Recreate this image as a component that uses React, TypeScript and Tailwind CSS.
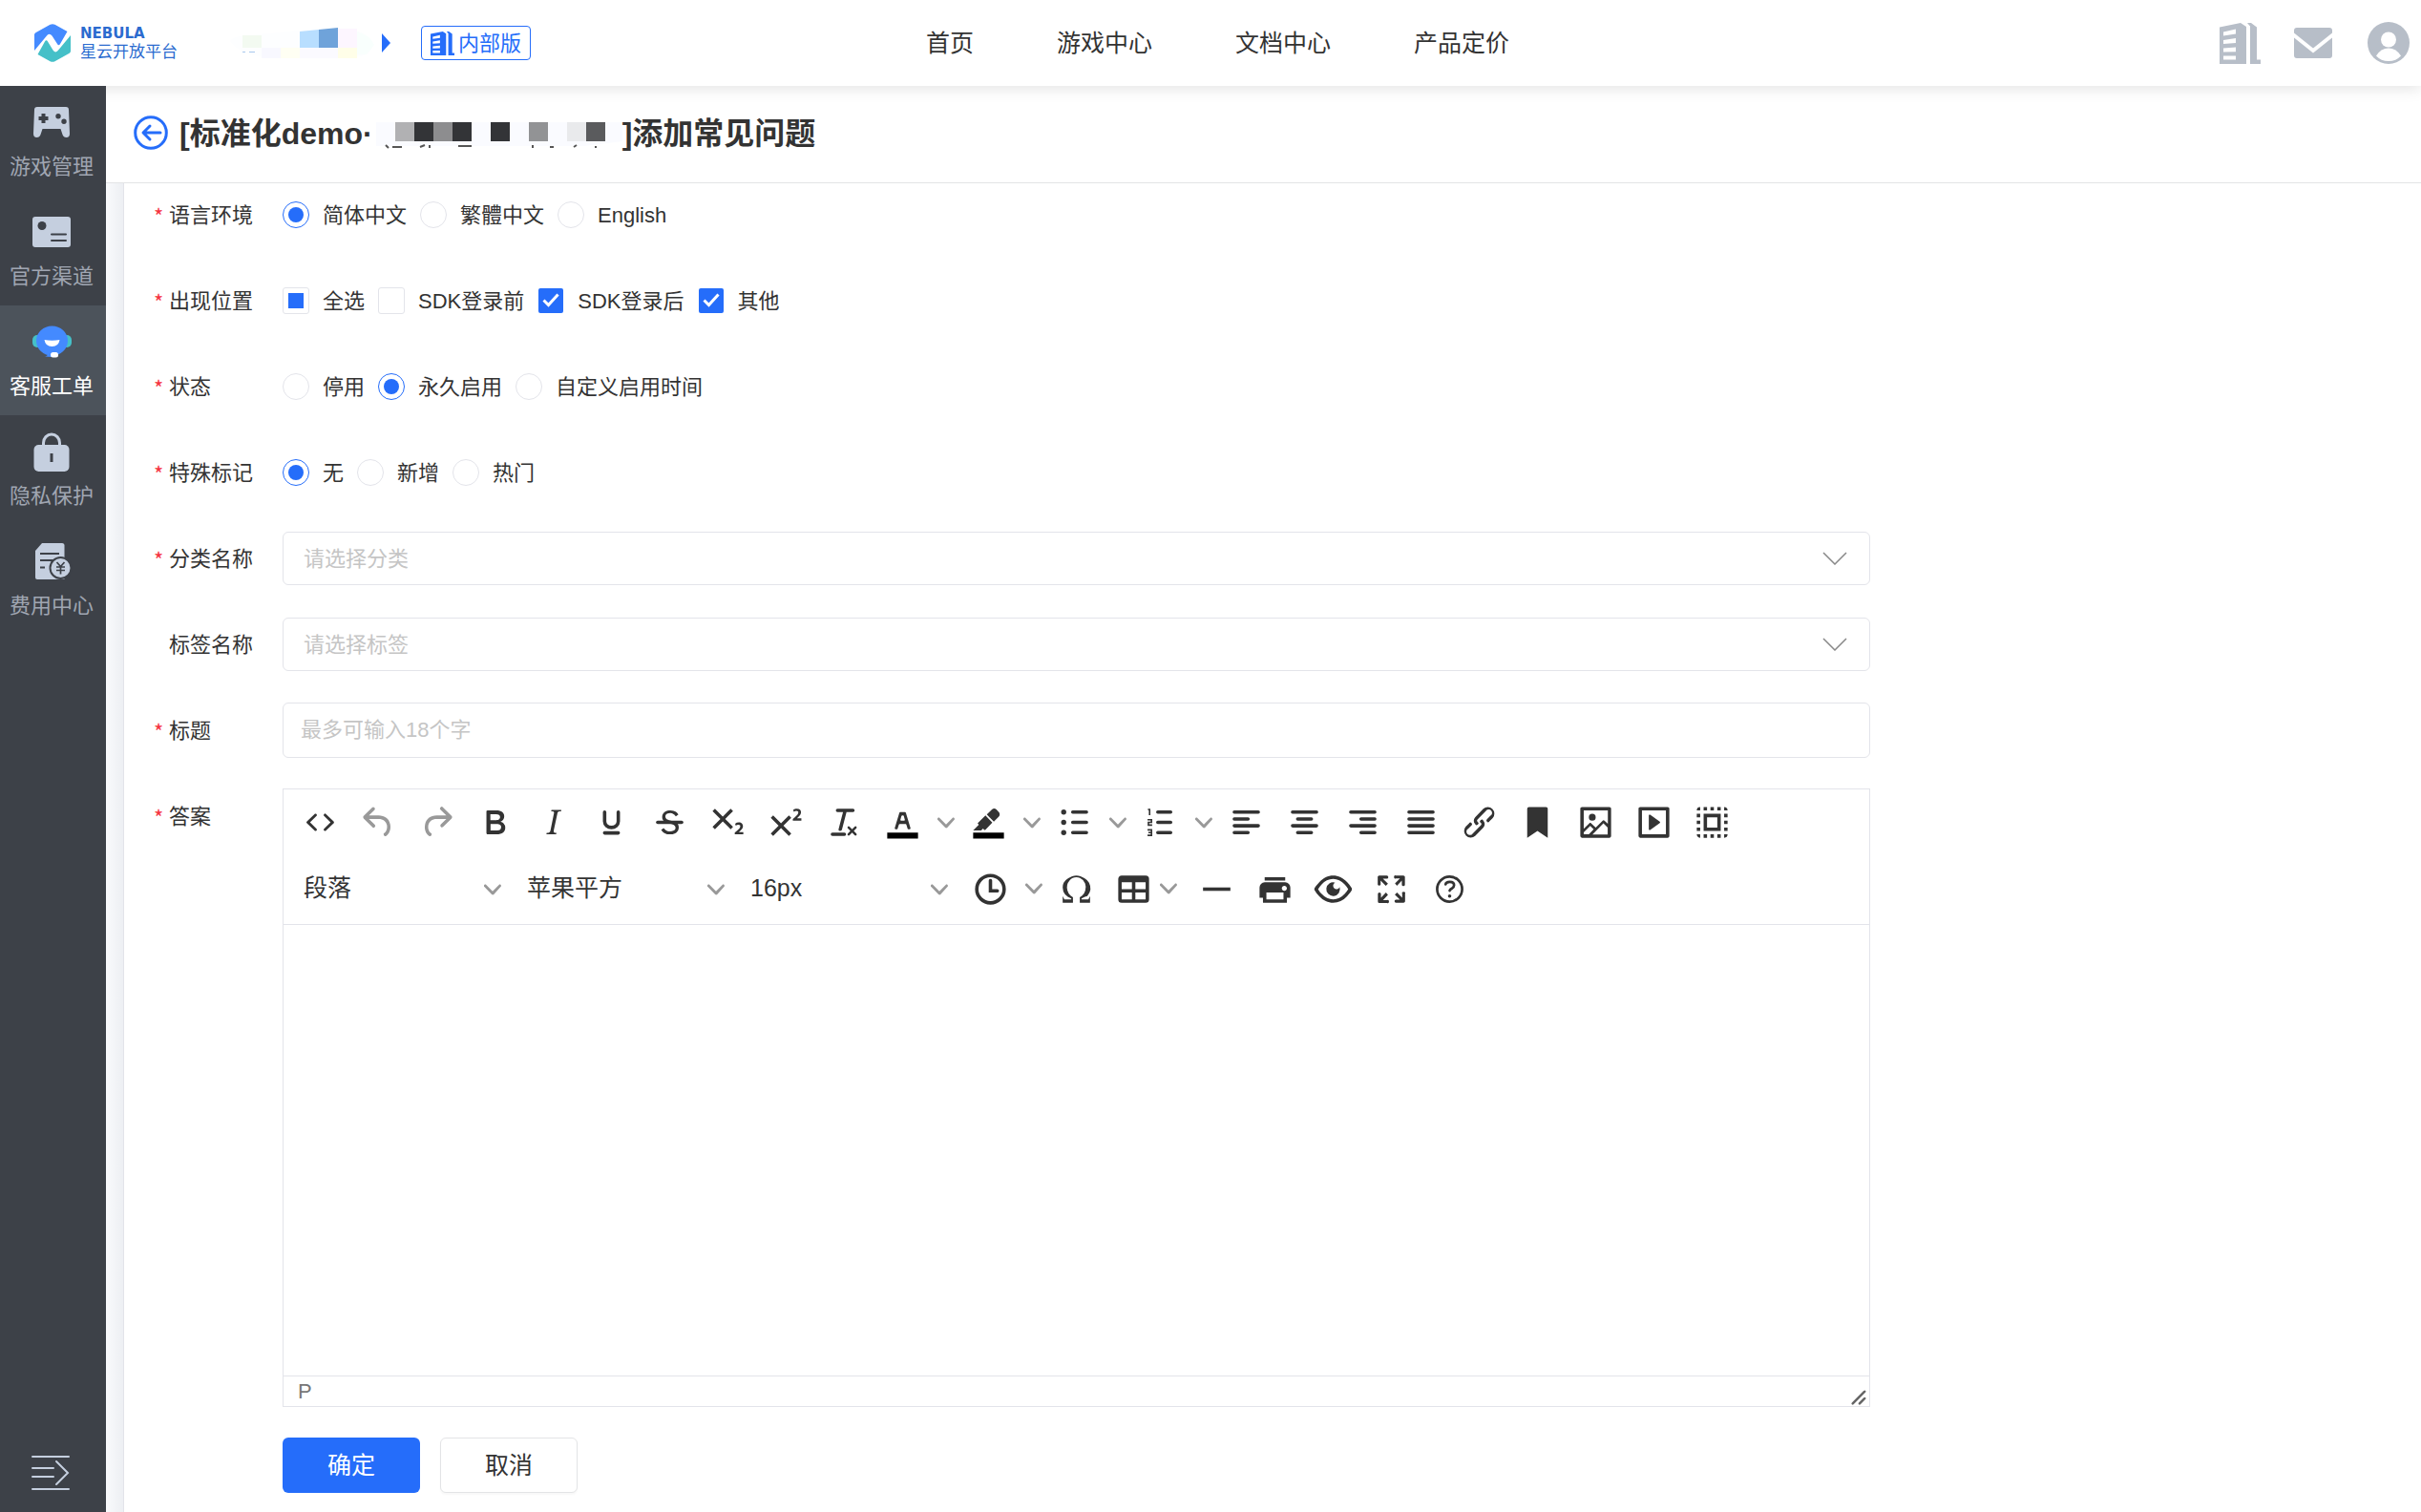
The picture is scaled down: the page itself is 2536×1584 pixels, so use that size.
import React, { useState } from 'react';
import { clsx } from 'clsx';

type SvgProps = { className?: string };

const LogoMark = () => (
  <svg viewBox="0 0 38 40" className="h-10 w-[38px]" aria-hidden="true">
    <path d="M0 28V11.500q0-1.500 1.300-2.300L16.500.800q2.500-1.300 5 0L34.500 8 27 21q-1.500 2.500-3 0l-5.500-8.500q-3-3.500-6 .5z" fill="#448aff" />
    <path d="M38 12v16.500q0 1.500-1.300 2.300L21.500 39.200q-2.500 1.300-5 0L3.500 32 11 18.500q1.500-2.500 3 0l5.500 9q3 4 6-.5z" fill="#45c0c8" />
  </svg>
);

const Building = ({ className }: SvgProps) => (
  <svg viewBox="0 0 43 43" className={className} fill="currentColor" aria-hidden="true">
    <path fillRule="evenodd" d="M0 4.500 22 0l6 4v39H0zM4 9.500v4l13-2V6.500zM4 18v4l13-1v-5zM4 26.500v4l13-.3v-4.700zM4 34.500v4h13v-4z" />
    <path d="M29 0h4l6 4.500V38.500h4V43H32V3.500z" />
  </svg>
);

const Mail = () => (
  <svg viewBox="0 0 40 32" className="h-8 w-10" fill="currentColor" aria-hidden="true">
    <path d="M3 0h34q3 0 3 3v2.500L20 21.500 0 5.500V3q0-3 3-3z" />
    <path d="M0 10.500 20 26.500l20-16V29q0 3-3 3H3q-3 0-3-3z" />
  </svg>
);

const Avatar = () => (
  <svg viewBox="0 0 44 44" className="size-11" aria-hidden="true">
    <circle cx="22" cy="22" r="22" fill="currentColor" />
    <circle cx="22" cy="18.500" r="8" fill="#fff" />
    <path d="M9 35.500Q14 27.500 22 27.500t13 8Q30 41 22 41T9 35.500z" fill="#fff" />
  </svg>
);

const Gamepad = () => (
  <svg viewBox="0 0 44 44" className="size-11" aria-hidden="true">
    <path
      fillRule="evenodd"
      fill="currentColor"
      d="M7 6h30q3 0 3 3l1 25q0 4-3.500 4-3 0-4-3l-2-6H12.500l-2 6q-1 3-4 3Q3 38 3 34L4 9q0-3 3-3zm4.500 7v3h-3v4h3v3h4v-3h3v-4h-3v-3zM29 13a2.700 2.700 0 1 0 0 5.400A2.700 2.700 0 0 0 29 13zm6 5.500a2.700 2.700 0 1 0 0 5.400 2.700 2.700 0 0 0 0-5.400z"
    />
  </svg>
);

const Channel = () => (
  <svg viewBox="0 0 44 44" className="size-11" aria-hidden="true">
    <rect x="2" y="6" width="40" height="32" rx="3" fill="currentColor" />
    <circle cx="12" cy="15.500" r="4.500" fill="#3d4148" />
    <path d="M22 24.500h15M22 31h15" stroke="#3d4148" strokeWidth="2" strokeLinecap="round" />
  </svg>
);

const Robot = () => (
  <svg viewBox="0 0 44 44" className="size-11" aria-hidden="true">
    <rect x="2" y="15" width="10" height="13" rx="5" fill="#45c0c8" />
    <rect x="33" y="15" width="10" height="13" rx="5" fill="#45c0c8" />
    <ellipse cx="22.500" cy="21" rx="16.500" ry="15.500" fill="#448aff" />
    <path d="M15 37.500q4-1 3-4h10l-6 4.500z" fill="#448aff" />
    <path d="M14.500 20q8 1.500 16 0-1 7-8 7t-8-7z" fill="#fff" />
    <rect x="21" y="33" width="8" height="5.500" rx="2.500" fill="#fff" />
  </svg>
);

const Lock = () => (
  <svg viewBox="0 0 44 44" className="size-11" aria-hidden="true">
    <path d="M13.500 18v-5a8.500 9 0 0 1 17 0v5" fill="none" stroke="currentColor" strokeWidth="3" />
    <rect x="3.500" y="15" width="37" height="28" rx="5" fill="currentColor" />
    <path d="M22 24v9" stroke="#3d4148" strokeWidth="3" />
  </svg>
);

const Bill = () => (
  <svg viewBox="0 0 44 44" className="size-11" aria-hidden="true">
    <path d="M12 3h21q2.500 0 2.500 2.500V41H7q-2 0-2-2V11z" fill="currentColor" />
    <path d="M10 14h20M10 21h14M10 28.500h5" stroke="#3d4148" strokeWidth="2" />
    <circle cx="31.500" cy="29" r="12" fill="#3d4148" />
    <circle cx="31.500" cy="29" r="10" fill="currentColor" />
    <path d="m27.500 23 4 4.500 4-4.500M31.500 27v8.500M27 28h9M27 31.500h9" fill="none" stroke="#3d4148" strokeWidth="1.700" />
  </svg>
);

const Expand = () => (
  <svg viewBox="0 0 40 38" className="h-[38px] w-10" fill="none" stroke="currentColor" strokeWidth="2" strokeLinecap="round" aria-hidden="true">
    <path d="M1 2h38M1 14h22M1 23h22M1 36h38M26 7l12 12-12 12" />
  </svg>
);

const Chevron = ({ className }: SvgProps) => (
  <svg viewBox="0 0 10 10" className={clsx('size-[18px] shrink-0 text-[#999]', className)} fill="currentColor" aria-hidden="true">
    <path d="M8.700 2.200c.3-.3.8-.3 1 0 .4.4.4.9 0 1.200L5.700 7.800c-.3.3-.9.3-1.200 0L.2 3.400a.8.800 0 0 1 0-1.200c.3-.3.8-.3 1.100 0L5 6l3.700-3.800z" />
  </svg>
);

const ToolIcon = ({ children }: { children: React.ReactNode }) => (
  <svg viewBox="0 0 24 24" className="size-[43px] shrink-0" fill="currentColor" fillRule="evenodd" aria-hidden="true">
    {children}
  </svg>
);

const lines = (d: string) => <path d={d} fill="none" stroke="currentColor" strokeWidth="2" strokeLinecap="round" />;

type Tool = { label: string; icon: React.ReactNode; split?: boolean; disabled?: boolean };

const topTools: Tool[] = [
  {
    label: '源代码',
    icon: <path d="M9.800 15.700c.3.3.3.8 0 1-.3.4-.9.4-1.200 0l-4.400-4.100a.8.800 0 0 1 0-1.200l4.400-4.200c.3-.3.9-.3 1.200 0 .3.3.3.8 0 1.100L6 12l3.800 3.700zM14.200 15.700c-.3.3-.3.8 0 1 .4.4.9.4 1.200 0l4.400-4.100c.3-.3.3-.9 0-1.200l-4.400-4.200a.8.800 0 0 0-1.200 0c-.3.3-.3.8 0 1.100L18 12l-3.800 3.700z" />,
  },
  {
    label: '撤销',
    disabled: true,
    icon: <path d="M6.400 8H12c3.700 0 6.200 2 6.800 5.100.6 2.700-.4 5.600-2.300 6.800a1 1 0 0 1-1-1.800c1.100-.6 1.800-2.700 1.400-4.600-.5-2.100-2.100-3.500-4.900-3.500H6.400l3.300 3.300a1 1 0 1 1-1.400 1.400l-5-5a1 1 0 0 1 0-1.400l5-5a1 1 0 0 1 1.400 1.400L6.400 8z" />,
  },
  {
    label: '重做',
    disabled: true,
    icon: <path d="M17.600 10H12c-2.800 0-4.400 1.400-4.900 3.500-.4 2 .3 4 1.400 4.600a1 1 0 1 1-1 1.800c-2-1.200-2.900-4.100-2.300-6.800.6-3 3-5.100 6.800-5.100h5.600l-3.300-3.300a1 1 0 1 1 1.400-1.400l5 5a1 1 0 0 1 0 1.400l-5 5a1 1 0 0 1-1.400-1.400l3.300-3.300z" />,
  },
  {
    label: '粗体',
    icon: <path d="M7.800 19c-.3 0-.5 0-.6-.2l-.2-.5V5.700c0-.2 0-.4.2-.5l.6-.2h5c1.500 0 2.700.3 3.500 1 .7.6 1.100 1.400 1.100 2.500a3 3 0 0 1-.6 1.900c-.4.6-1 1-1.600 1.200.4.1.9.3 1.300.6s.8.7 1 1.200c.4.4.5 1 .5 1.600 0 1.300-.4 2.300-1.300 3-.8.7-2.100 1-3.800 1H7.800zm5-8.300c.6 0 1.200-.1 1.600-.5.4-.3.6-.7.6-1.300 0-1.100-.8-1.700-2.300-1.700H9.300v3.500h3.400zm.5 6c.7 0 1.300-.1 1.700-.4.4-.4.6-.9.6-1.500s-.2-1-.7-1.400c-.4-.3-1-.4-2-.4H9.400v3.800h4z" />,
  },
  {
    label: '斜体',
    icon: <path d="M16.700 4.700l-.1.9h-.3c-.6 0-1 0-1.400.3-.3.3-.4.6-.5 1.100l-2.100 9.800v.6c0 .5.4.8 1.400.8h.2l-.2.8H8l.2-.8h.2c1.100 0 1.800-.5 2-1.500l2-9.800.1-.5c0-.6-.4-.8-1.400-.8h-.3l.2-.9h5.800z" />,
  },
  { label: '下划线', icon: lines('M8 6v5.500c0 2 1.800 3.500 4 3.500s4-1.500 4-3.500V6M8 18.200h8') },
  {
    label: '删除线',
    icon: (
      <>
        <path d="M15.600 8.500c-.5-.7-1-1.100-1.300-1.300-.6-.4-1.300-.6-2-.6-2.700 0-2.800 1.700-2.800 2.100 0 1.600 1.800 2 3.200 2.300 4.400.9 4.600 2.800 4.600 3.900 0 1.400-.7 4.100-5 4.100A6.200 6.200 0 0 1 7 16.400l1.500-1.100c.4.6 1.600 2 3.700 2 1.600 0 2.500-.4 3-1.200.4-.8.3-2-.8-2.600-.7-.4-1.600-.7-2.900-1-1-.2-3.900-.8-3.900-3.600C7.600 6 10.300 5 12.400 5c2.900 0 4.200 1.600 4.700 2.400l-1.500 1.100z" />
        <path d="M5 11h14a1 1 0 0 1 0 2H5a1 1 0 0 1 0-2z" />
      </>
    ),
  },
  {
    label: '下标',
    icon: <path d="M10.400 10l4.600 4.600-1.400 1.400L9 11.400 4.400 16 3 14.600 7.600 10 3 5.400 4.400 4 9 8.600 13.600 4 15 5.400 10.400 10zM21 19h-5v-1l1-.8 1.700-1.600c.3-.4.5-.8.5-1.200 0-.3 0-.6-.2-.7-.2-.2-.5-.3-.9-.3a2 2 0 0 0-.8.2l-.7.3-.4-1.100 1-.6 1.200-.2c.8 0 1.400.3 1.800.7.4.4.6.9.6 1.500s-.2 1.100-.5 1.600a8 8 0 0 1-1.300 1.300l-.6.6h2.600V19z" />,
  },
  {
    label: '上标',
    icon: <path d="M15 9.400L10.400 14l4.600 4.600-1.400 1.400L9 15.400 4.400 20 3 18.600 7.600 14 3 9.400 4.400 8 9 12.600 13.600 8 15 9.400zm5.900 1.600h-5v-1l1-.8 1.700-1.600c.3-.5.5-.9.5-1.300 0-.3 0-.5-.2-.7-.2-.2-.5-.3-.9-.3l-.8.2-.7.4-.4-1.200c.2-.2.5-.4 1-.5.3-.2.8-.2 1.200-.2.8 0 1.400.2 1.800.6.4.4.6 1 .6 1.600 0 .5-.2 1-.5 1.500l-1.300 1.400-.6.5h2.600V11z" />,
  },
  {
    label: '清除格式',
    icon: <path d="M13.200 6a1 1 0 0 1 0 .2l-2.600 10a1 1 0 0 1-1 .8h-.2a.8.800 0 0 1-.8-1l2.600-10H8a1 1 0 1 1 0-2h9a1 1 0 0 1 0 2h-3.800zM5 18h7a1 1 0 0 1 0 2H5a1 1 0 0 1 0-2zm13 1.500L16.500 18 15 19.500a.7.700 0 0 1-1-1l1.500-1.500-1.500-1.500a.7.700 0 0 1 1-1l1.500 1.500 1.500-1.500a.7.700 0 0 1 1 1L17.500 17l1.500 1.500a.7.700 0 0 1-1 1z" />,
  },
  {
    label: '文字颜色',
    split: true,
    icon: (
      <>
        <path d="M3 18h18v3.500H3z" fill="#000" />
        <path d="M8.700 16h-.8a.5.500 0 0 1-.5-.6l2.700-9c.1-.3.3-.4.5-.4h2.800c.2 0 .4.1.5.4l2.700 9a.5.500 0 0 1-.5.6h-.8a.5.500 0 0 1-.4-.4l-.7-2.200c0-.3-.3-.4-.5-.4h-3.400c-.2 0-.4.1-.5.4l-.7 2.200c0 .3-.2.4-.4.4zm2.600-7.600l-.6 2a.5.500 0 0 0 .5.6h1.600a.5.500 0 0 0 .5-.6l-.6-2c0-.3-.3-.4-.5-.4h-.4c-.2 0-.4.1-.5.4z" />
      </>
    ),
  },
  {
    label: '背景颜色',
    split: true,
    icon: (
      <>
        <path d="M3 18h18v3.500H3z" fill="#000" />
        <path d="M7.700 16.700H3l3.300-3.300-.7-.8L10.200 8l4 4.100-4 4.200c-.2.2-.6.2-.8 0l-.6-.7-1.100 1.100zm5-7.500L11 7.400l3-2.900a2 2 0 0 1 2.600 0L18 6c.7.7.7 2 0 2.700l-2.900 2.900-1.800-1.800-.5-.6z" />
      </>
    ),
  },
  {
    label: '项目符号列表',
    split: true,
    icon: (
      <>
        {lines('M11 6h8M11 12h8M11 18h8')}
        <circle cx="5.700" cy="6" r="1.500" />
        <circle cx="5.700" cy="12" r="1.500" />
        <circle cx="5.700" cy="18" r="1.500" />
      </>
    ),
  },
  {
    label: '编号列表',
    split: true,
    icon: (
      <>
        {lines('M10.500 6h7.500M10.500 12h7.500M10.500 18h7.500')}
        <path d="M4.700 4.500h1v3.300M4.500 10.500h2.300V12H5v1.600h2.200M4.500 16.400h2.300v3.200H4.500M5 18h1.800" fill="none" stroke="currentColor" strokeWidth=".9" />
      </>
    ),
  },
  { label: '左对齐', icon: lines('M5 6h14M5 10h8M5 14h14M5 18h8') },
  { label: '居中', icon: lines('M5 6h14M8 10h8M5 14h14M8 18h8') },
  { label: '右对齐', icon: lines('M5 6h14M11 10h8M5 14h14M11 18h8') },
  { label: '两端对齐', icon: lines('M5 6h14M5 10h14M5 14h14M5 18h14') },
  {
    label: '插入链接',
    icon: <path d="M6.200 12.300a1 1 0 0 1 1.400 1.400l-2.100 2a2 2 0 1 0 2.700 2.800l4.800-4.800a1 1 0 0 0 0-1.400 1 1 0 1 1 1.400-1.300 2.900 2.900 0 0 1 0 4L9.600 20a3.900 3.900 0 0 1-5.500-5.500l2-2zm11.600-.6a1 1 0 0 1-1.400-1.400l2-2a2 2 0 1 0-2.600-2.800L11 10.300a1 1 0 0 0 0 1.400A1 1 0 1 1 9.600 13a2.900 2.900 0 0 1 0-4L14.400 4a3.900 3.900 0 0 1 5.500 5.500l-2 2z" />,
  },
  { label: '锚点', icon: <path d="M6 4v17l6-4 6 4V4c0-.6-.4-1-1-1H7a1 1 0 0 0-1 1z" /> },
  {
    label: '图片',
    icon: <path d="M5 15.700l3.300-3.200c.3-.3.7-.3 1 0L12 15l4.100-4c.3-.4.8-.4 1 0l2 1.900V5H5v10.700zM5 18V19h3l2.800-2.900-2-2L5 17.900zm14-3l-2.500-2.400-6.400 6.500H19v-4zM4 3h16c.6 0 1 .4 1 1v16c0 .6-.4 1-1 1H4a1 1 0 0 1-1-1V4c0-.6.4-1 1-1zm6 8a2 2 0 1 0 0-4 2 2 0 0 0 0 4z" />,
  },
  {
    label: '视频',
    icon: <path d="M4 3h16c.6 0 1 .4 1 1v16c0 .6-.4 1-1 1H4a1 1 0 0 1-1-1V4c0-.6.4-1 1-1zm1 2v14h14V5H5zm4.800 2.600l5.600 4a.5.500 0 0 1 0 .8l-5.600 4A.5.500 0 0 1 9 16V8a.5.500 0 0 1 .8-.4z" />,
  },
  {
    label: '全选',
    icon: <path d="M3 5h2V3a2 2 0 0 0-2 2zm0 8h2v-2H3v2zm4 8h2v-2H7v2zM3 9h2V7H3v2zm10-6h-2v2h2V3zm6 0v2h2a2 2 0 0 0-2-2zM5 21v-2H3c0 1.100.9 2 2 2zm-2-4h2v-2H3v2zM9 3H7v2h2V3zm2 18h2v-2h-2v2zm8-8h2v-2h-2v2zm0 8a2 2 0 0 0 2-2h-2v2zm0-12h2V7h-2v2zm0 8h2v-2h-2v2zm-4 4h2v-2h-2v2zm0-16h2V3h-2v2zM7 17h10V7H7v10zm2-8h6v6H9V9z" />,
  },
];

const insertTools: Tool[] = [
  {
    label: '日期时间',
    split: true,
    icon: (
      <>
        <path d="M12 19a7 7 0 1 0 0-14 7 7 0 0 0 0 14zm0 2a9 9 0 1 1 0-18 9 9 0 0 1 0 18z" />
        <path d="M16 12h-3V7c0-.6-.4-1-1-1a1 1 0 0 0-1 1v7h5c.6 0 1-.4 1-1s-.4-1-1-1z" />
      </>
    ),
  },
  {
    label: '特殊字符',
    icon: <path d="M15 18h4l1-2v4h-6v-3.300l1.400-1a6 6 0 0 0 1.800-2.900 6.300 6.300 0 0 0-.1-4.100 5.800 5.800 0 0 0-3-3.200c-.6-.3-1.300-.5-2.100-.5a5.100 5.100 0 0 0-3.900 1.800 6.300 6.300 0 0 0-1.300 6 6.200 6.200 0 0 0 1.800 3l1.400.9V20H4v-4l1 2h4v-.5l-2-1L5.400 15A6.500 6.500 0 0 1 4 11c0-1 .2-1.900.6-2.700A7 7 0 0 1 7.300 5.600C8.800 4.600 10.300 4 12 4s3.200.6 4.700 1.600a7 7 0 0 1 2.700 2.700 6.800 6.800 0 0 1-1 7.700L17 16.500l-2 1v.5z" />,
  },
];

const viewTools: Tool[] = [
  { label: '水平线', icon: <path d="M4 11h16v2H4z" /> },
  {
    label: '打印',
    icon: <path d="M18 8H6a3 3 0 0 0-3 3v6h2v3h14v-3h2v-6a3 3 0 0 0-3-3zm-1 10H7v-4h10v4zm.5-5c-.8 0-1.500-.7-1.500-1.500s.7-1.500 1.500-1.500 1.500.7 1.500 1.500-.7 1.500-1.500 1.500zm.5-8H6v2h12V5z" />,
  },
  {
    label: '预览',
    icon: <path d="M3.500 12.500c.5.8 1.100 1.600 1.800 2.300 2 2 4.200 3.200 6.700 3.200s4.700-1.200 6.700-3.200a16.200 16.200 0 0 0 2.100-2.800 15.700 15.700 0 0 0-2.100-2.800c-2-2-4.200-3.200-6.700-3.200a9.300 9.300 0 0 0-6.700 3.200A16.200 16.200 0 0 0 3.200 12c0 .2.2.3.3.5zm-2.400-1l.7-1.200L4 7.800C6.200 5.400 8.900 4 12 4c3 0 5.800 1.400 8.100 3.800a18.200 18.200 0 0 1 2.800 3.700v1l-.7 1.200-2.100 2.500c-2.300 2.400-5 3.800-8.100 3.800-3 0-5.800-1.400-8.100-3.800a18.200 18.200 0 0 1-2.800-3.700 1 1 0 0 1 0-1zm12-3.300a2 2 0 1 0 2.700 2.600 4 4 0 1 1-2.600-2.600z" />,
  },
  {
    label: '全屏',
    icon: <path d="M15.300 10l-1.200-1.300 2.900-3h-2.300a.9.900 0 1 1 0-1.700H19c.5 0 .9.4.9.9v4.400a.9.900 0 1 1-1.800 0V7l-2.900 3zm0 4l3 3v-2.300a.9.900 0 1 1 1.700 0V19c0 .5-.4.9-.9.9h-4.400a.9.900 0 1 1 0-1.800H17l-3-2.900 1.300-1.200zM10 15.400l-2.900 3h2.300a.9.900 0 1 1 0 1.700H5a.9.900 0 0 1-.9-.9v-4.400a.9.900 0 1 1 1.800 0V17l2.900-3 1.200 1.300zM8.700 10L5.700 7v2.300a.9.900 0 0 1-1.700 0V5c0-.5.4-.9.9-.9h4.400a.9.900 0 0 1 0 1.800H7l3 2.900-1.300 1.200z" />,
  },
  {
    label: '帮助',
    icon: (
      <>
        <circle cx="12" cy="12" r="7.300" fill="none" stroke="currentColor" strokeWidth="1.500" />
        <path d="M9.600 9.200c.2-1 1.200-1.500 2.500-1.500 1.500 0 2.500.7 2.500 1.900 0 1-.5 1.500-1.300 2-.8.4-1.100.8-1.300 1.300" fill="none" stroke="currentColor" strokeWidth="1.500" strokeLinecap="round" />
        <circle cx="12" cy="16" r="1" />
      </>
    ),
  },
];

const ToolButton = ({ tool }: { tool: Tool }) => (
  <>
    <button
      type="button"
      aria-label={tool.label}
      disabled={tool.disabled}
      className="flex h-[61px] w-[61px] items-center justify-center text-[#333] disabled:text-[#999]"
    >
      <ToolIcon>{tool.icon}</ToolIcon>
    </button>
    {tool.split && (
      <button type="button" aria-label={`${tool.label}选项`} className="flex h-[61px] w-[29px] items-center justify-center">
        <Chevron />
      </button>
    )}
  </>
);

const ToolSelect = ({ label, value }: { label: string; value: string }) => (
  <div className="relative w-[234px]">
    <select aria-label={label} className="h-[61px] w-full appearance-none bg-transparent pl-[13px] text-[25px] text-[#333]">
      <option>{value}</option>
    </select>
    <Chevron className="pointer-events-none absolute top-[22px] right-[14px]" />
  </div>
);

const Editor = () => (
  <div className="flex h-[648px] flex-col border border-[#e3e4ea]">
    <div role="toolbar" aria-label="编辑器工具栏" className="border-b border-[#e3e4ea] pb-0.5 pl-2">
      <div className="flex h-[69px] items-center">
        {topTools.map((tool) => (
          <ToolButton key={tool.label} tool={tool} />
        ))}
      </div>
      <div className="flex h-[70px] items-center">
        <ToolSelect label="段落格式" value="段落" />
        <ToolSelect label="字体" value="苹果平方" />
        <ToolSelect label="字号" value="16px" />
        {insertTools.map((tool) => (
          <ToolButton key={tool.label} tool={tool} />
        ))}
        <button type="button" aria-label="表格" className="flex h-[61px] w-[86px] items-center gap-1.5 pl-2 text-[#333]">
          <ToolIcon>
            <path d="M19 4a2 2 0 0 1 2 2v12a2 2 0 0 1-2 2H5a2 2 0 0 1-2-2V6c0-1.100.9-2 2-2h14zM5 14v4h6v-4H5zm14 0h-6v4h6v-4zm0-6h-6v4h6V8zM5 12h6V8H5v4z" />
          </ToolIcon>
          <Chevron />
        </button>
        {viewTools.map((tool) => (
          <ToolButton key={tool.label} tool={tool} />
        ))}
      </div>
    </div>
    <textarea id="answer" className="w-full flex-1 resize-none p-4 text-[25px] outline-none" />
    <div className="flex h-8 items-center justify-between border-t border-[#e3e4ea] pr-0.5 pl-[15px] text-[22px] text-[#777]">
      <span>P</span>
      <svg viewBox="0 0 10 10" className="size-[18px] self-end" fill="#666" aria-hidden="true">
        <path d="M8.100 1.100A.5.500 0 1 1 9 2l-7 7A.5.500 0 1 1 1 8l7-7zM8.100 5.100A.5.500 0 1 1 9 6l-3 3A.5.500 0 1 1 5 8l3-3z" />
      </svg>
    </div>
  </div>
);

const FormRow = ({ label, htmlFor, required = true, children }: { label: string; htmlFor?: string; required?: boolean; children: React.ReactNode }) => {
  const Tag = htmlFor ? 'label' : 'span';
  return (
    <div className="grid grid-cols-[135px_1fr]">
      <Tag htmlFor={htmlFor} className="flex h-[58px] items-center">
        <span className="w-4 font-['Noto_Sans_CJK_SC',sans-serif] text-[#f5333f]">{required && '*'}</span>
        {label}
      </Tag>
      {children}
    </div>
  );
};

const RadioGroup = ({ name, options, initial }: { name: string; options: string[]; initial: string }) => {
  const [value, setValue] = useState(initial);
  return (
    <div role="radiogroup" aria-label={name} className="flex h-[58px] items-center gap-[14px]">
      {options.map((option) => (
        <label key={option} className="flex items-center gap-[14px]">
          <input
            type="radio"
            name={name}
            checked={value === option}
            onChange={() => setValue(option)}
            className="grid size-7 appearance-none place-items-center rounded-full border border-[#e3e4ea] before:size-4 before:rounded-full checked:border-[#256dfa] checked:before:bg-[#256dfa]"
          />
          {option}
        </label>
      ))}
    </div>
  );
};

const places = ['SDK登录前', 'SDK登录后', '其他'];

const PlaceGroup = () => {
  const [picked, setPicked] = useState(['SDK登录后', '其他']);
  const all = picked.length === places.length;
  const some = picked.length > 0 && !all;
  const toggle = (place: string) =>
    setPicked(picked.includes(place) ? picked.filter((p) => p !== place) : [...picked, place]);

  const box = 'size-7 appearance-none rounded-[3px] border row-start-1 col-start-1';
  const tick = (
    <svg viewBox="0 0 28 28" className="pointer-events-none col-start-1 row-start-1 size-7" fill="none" stroke="#fff" strokeWidth="3" aria-hidden="true">
      <path d="m6.500 13.500 5 5 10-11" />
    </svg>
  );

  return (
    <div role="group" aria-label="出现位置" className="flex h-[58px] items-center gap-[14px]">
      <label className="flex items-center gap-[14px]">
        <span className="grid place-items-center">
          <input
            type="checkbox"
            checked={all}
            onChange={() => setPicked(all ? [] : places)}
            className={clsx(box, 'border-[#e3e4ea]', all && 'bg-[#256dfa]')}
          />
          {some && <span className="pointer-events-none col-start-1 row-start-1 size-4 bg-[#256dfa]" />}
          {all && tick}
        </span>
        全选
      </label>
      {places.map((place) => (
        <label key={place} className="flex items-center gap-[14px]">
          <span className="grid place-items-center">
            <input
              type="checkbox"
              checked={picked.includes(place)}
              onChange={() => toggle(place)}
              className={clsx(box, picked.includes(place) ? 'border-transparent bg-[#256dfa] bg-clip-padding' : 'border-[#e3e4ea]')}
            />
            {picked.includes(place) && tick}
          </span>
          {place}
        </label>
      ))}
    </div>
  );
};

const SelectField = ({ id, placeholder }: { id: string; placeholder: string }) => (
  <div className="relative flex h-[58px] items-center">
    <select id={id} className="h-14 w-full appearance-none rounded-md border border-[#e3e4ea] bg-white pl-[21px] text-[#c5c5c5]">
      <option>{placeholder}</option>
    </select>
    <svg viewBox="0 0 26 14" className="pointer-events-none absolute right-6 h-[14px] w-[26px]" fill="none" stroke="#888" strokeWidth="1.500" aria-hidden="true">
      <path d="m1 1 12 12L25 1" />
    </svg>
  </div>
);

const sideItems = [
  { label: '游戏管理', icon: <Gamepad /> },
  { label: '官方渠道', icon: <Channel /> },
  { label: '客服工单', icon: <Robot />, active: true },
  { label: '隐私保护', icon: <Lock /> },
  { label: '费用中心', icon: <Bill /> },
];

const Header = () => (
  <header className="relative z-10 grid h-[90px] grid-cols-[38.25%_auto_1fr] items-center bg-white text-[25px] text-[#333] shadow-[0_2px_16px_rgba(0,0,0,0.12)]">
    <div className="flex items-center">
      <a href="#" className="ml-9 flex items-center gap-2.5 text-[#2b6bcf]">
        <LogoMark />
        <span className="flex w-[102px] flex-col pt-1">
          <span className="font-['DejaVu_Sans'] text-[15px] leading-4 font-bold">NEBULA</span>
          <span className="text-[17px] leading-6 whitespace-nowrap">星云开放平台</span>
        </span>
      </a>
      <svg viewBox="0 0 152 32" className="ml-[55px] h-8 w-[152px]" aria-hidden="true">
        <path d="M0 14Q4 8 20 8L70 3h60q14 2 20 14-2 13-20 14H36Q10 28 0 14z" fill="#fdfeff" />
        <path d="M13 8h20v13H13z" fill="#f3faf1" />
        <path d="M113 1h20v20h-20z" fill="#fdf6ff" />
        <path d="M133 4q14 4 18 14l-8 10h-10z" fill="#f9fffd" />
        <path d="M33 21h20v11H33z" fill="#f8f8ff" />
        <path d="M53 21h20v11H53z" fill="#fffff3" />
        <path d="M73 21h40v11H73z" fill="#fbfaff" />
        <path d="M113 21h20v11h-20z" fill="#fffee8" />
        <path d="M73 4l20-2v19H73z" fill="#b8deff" />
        <path d="M93 2l20-2v21H93z" fill="#6fa3da" />
        <path d="M13 25h3v1h-3zM20 25h6v1h-6z" fill="#a9c8ee" />
      </svg>
      <svg viewBox="0 0 9 20" className="ml-[7px] h-5 w-[9px]" fill="#256dfa" aria-hidden="true">
        <path d="M0 0l9 10-9 10z" />
      </svg>
      <button type="button" className="ml-8 flex h-9 w-[115px] items-center gap-1 rounded-[4px] border border-[#256dfa] pl-[9px] text-[22px] text-[#256dfa]">
        <Building className="size-[25px]" />
        内部版
      </button>
    </div>
    <nav className="flex gap-[87px] pt-0.5">
      <a href="#">首页</a>
      <a href="#">游戏中心</a>
      <a href="#">文档中心</a>
      <a href="#">产品定价</a>
    </nav>
    <div className="mr-3 flex items-center justify-end text-[#b7bec8]">
      <button type="button" aria-label="企业">
        <Building className="size-[43px]" />
      </button>
      <button type="button" aria-label="消息" className="ml-[35px]">
        <Mail />
      </button>
      <button type="button" aria-label="账号" className="ml-[37px]">
        <Avatar />
      </button>
    </div>
  </header>
);

const Sidebar = () => (
  <aside className="relative z-20 flex w-[111px] shrink-0 flex-col justify-between bg-[#3d4148]">
    <nav>
      {sideItems.map((item) => (
        <a
          key={item.label}
          href="#"
          className={clsx('flex h-[115px] flex-col items-center pt-4 pr-[3px]', item.active ? 'bg-[#4c535b] text-white' : 'text-[#c5cfdf]')}
        >
          {item.icon}
          <span className={clsx('mt-2.5 leading-[30px]', !item.active && 'text-[#a0a6b2]')}>{item.label}</span>
        </a>
      ))}
    </nav>
    <button type="button" aria-label="展开菜单" className="mb-[22px] ml-[33px] self-start text-[#c5cfdf]">
      <Expand />
    </button>
  </aside>
);

const TitleBar = () => (
  <div className="flex h-[102px] items-center border-b border-[#e3e4e6] pb-1 pl-[29px]">
    <a href="#" aria-label="返回" className="text-[#256dfa]">
      <svg viewBox="0 0 36 36" className="size-9" fill="none" stroke="currentColor" strokeWidth="3" strokeLinecap="round" strokeLinejoin="round" aria-hidden="true">
        <circle cx="18" cy="18" r="16.300" />
        <path d="M28 18H11M17 11l-7 7 7 7" />
      </svg>
    </a>
    <h1 className="ml-3 flex items-center pt-0.5 text-[32px] font-bold">
      [标准化demo·
      <svg viewBox="0 0 258 28" className="mt-1 ml-[3px] h-7 w-[258px]" aria-hidden="true">
        <path d="M0 0h258v20l-40 5H0z" fill="#fafbff" />
        <path d="M20 0h20v20H20z" fill="#b1b1b3" />
        <path d="M40 0h20v20H40zM80 0h20v20H80zM120 0h20v20h-20z" fill="#333437" />
        <path d="M60 0h20v20H60z" fill="#8d8d8f" />
        <path d="M160 0h20v20h-20z" fill="#929395" />
        <path d="M200 0h20v20h-20z" fill="#e9eaec" />
        <path d="M220 0h20v20h-20z" fill="#5a5b5d" />
        <path d="M10 24l3 3M17 26h10M46 26l5-2M56 24v3M86 25h14M164 24v3M182 26h4M207 26l3-2M230 25v2" stroke="#555" strokeWidth="2" />
      </svg>
      ]添加常见问题
    </h1>
  </div>
);

const App = () => (
  <div className="flex min-h-screen flex-col bg-white font-['Liberation_Sans','Noto_Sans_CJK_SC',sans-serif] text-[22px] text-[#333]">
    <Header />
    <div className="flex flex-1">
      <Sidebar />
      <main className="flex flex-1 flex-col">
        <TitleBar />
        <div className="flex flex-1">
          <div className="w-[19px] border-r border-[#e3e4ea] bg-linear-to-r from-[#f9fafc] to-[#edeff3]" />
          <div className="flex-1">
            <form className="flex w-[76%] flex-col gap-8 pt-1 pb-5 pl-[31px]">
              <FormRow label="语言环境">
                <RadioGroup name="语言环境" options={['简体中文', '繁體中文', 'English']} initial="简体中文" />
              </FormRow>
              <FormRow label="出现位置">
                <PlaceGroup />
              </FormRow>
              <FormRow label="状态">
                <RadioGroup name="状态" options={['停用', '永久启用', '自定义启用时间']} initial="永久启用" />
              </FormRow>
              <FormRow label="特殊标记">
                <RadioGroup name="特殊标记" options={['无', '新增', '热门']} initial="无" />
              </FormRow>
              <FormRow label="分类名称" htmlFor="category">
                <SelectField id="category" placeholder="请选择分类" />
              </FormRow>
              <FormRow label="标签名称" htmlFor="tag" required={false}>
                <SelectField id="tag" placeholder="请选择标签" />
              </FormRow>
              <FormRow label="标题" htmlFor="title">
                <input
                  id="title"
                  type="text"
                  placeholder="最多可输入18个字"
                  className="h-[58px] rounded-md border border-[#e3e4ea] pl-[18px] placeholder:text-[#c5c5c5]"
                />
              </FormRow>
              <FormRow label="答案" htmlFor="answer">
                <Editor />
              </FormRow>
              <div className="flex gap-[21px] pl-[135px] text-[25px]">
                <button type="submit" className="h-[58px] w-36 rounded-md bg-[#256dfa] pt-0.5 text-white">
                  确定
                </button>
                <button type="button" className="h-[58px] w-36 rounded-md border border-[#e3e4e6] bg-white pt-0.5 shadow-[0_2px_2px_rgba(0,0,0,0.03)]">
                  取消
                </button>
              </div>
            </form>
          </div>
        </div>
      </main>
    </div>
  </div>
);

export default App;
